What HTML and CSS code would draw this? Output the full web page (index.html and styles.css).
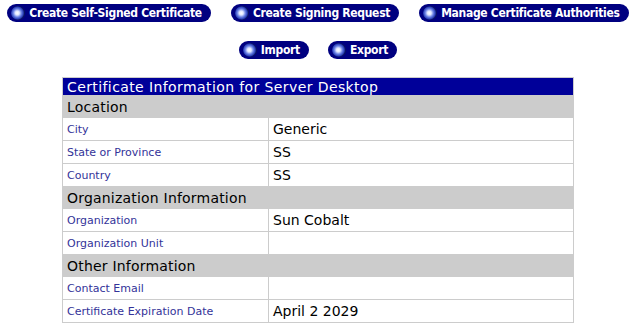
FILE: index.html
```html
<!DOCTYPE html>
<html lang="en">
<head>
  <meta charset="UTF-8" />
  <title>Certificate Information</title>
  <link rel="stylesheet" href="styles.css">
</head>
<body>
  <div class="actions">
    <a class="btn" href="#"><span class="ball"></span>Create Self-Signed Certificate</a>
    <a class="btn" href="#"><span class="ball"></span>Create Signing Request</a>
    <a class="btn" href="#"><span class="ball"></span>Manage Certificate Authorities</a>
  </div>
  <div class="actions second">
    <a class="btn" href="#"><span class="ball"></span>Import</a>
    <a class="btn" href="#"><span class="ball"></span>Export</a>
  </div>

  <table class="info">
    <tr><th colspan="2" class="title">Certificate Information for Server Desktop</th></tr>
    <tr><td colspan="2" class="section">Location</td></tr>
    <tr><td class="label">City</td><td class="value">Generic</td></tr>
    <tr><td class="label">State or Province</td><td class="value">SS</td></tr>
    <tr><td class="label">Country</td><td class="value">SS</td></tr>
    <tr><td colspan="2" class="section">Organization Information</td></tr>
    <tr><td class="label">Organization</td><td class="value">Sun Cobalt</td></tr>
    <tr><td class="label">Organization Unit</td><td class="value"></td></tr>
    <tr><td colspan="2" class="section">Other Information</td></tr>
    <tr><td class="label">Contact Email</td><td class="value"></td></tr>
    <tr><td class="label">Certificate Expiration Date</td><td class="value">April 2 2029</td></tr>
  </table>
</body>
</html>
```

FILE: styles.css
```css
body {
  margin: 0;
  background: #ffffff;
  font-family: "DejaVu Sans", sans-serif;
}

.actions {
  display: flex;
  justify-content: center;
  gap: 20px;
  padding-top: 4px;
}

.actions.second {
  gap: 19px;
  padding-top: 19px;
}

.btn {
  display: flex;
  align-items: center;
  height: 18px;
  padding: 0 9px 0 4px;
  border-radius: 9px;
  background: #000080;
  color: #ffffff;
  text-decoration: none;
  font-family: "DejaVu Sans Condensed", "DejaVu Sans", sans-serif;
  font-weight: bold;
  font-size: 12px;
  letter-spacing: -0.3px;
  white-space: nowrap;
}

.ball {
  width: 14px;
  height: 14px;
  margin-right: 4px;
  border-radius: 50%;
  background: radial-gradient(circle at 45% 50%, #ffffff 0, #dfe6ff 2px, #6f86e6 4px, #2a3fb8 6px, #0b1560 7px);
}

.info {
  margin: 18px auto 0;
  width: 512px;
  border-collapse: collapse;
}

.info td, .info th {
  border: 1px solid #cccccc;
  padding: 0 4px;
  text-align: left;
}

.title {
  background: #000099;
  color: #ffffff;
  font-weight: normal;
  font-size: 14px;
  letter-spacing: 0.4px;
  height: 17px;
  border-color: #000099;
}

.section {
  background: #cccccc;
  color: #000000;
  font-size: 14px;
  letter-spacing: 0.2px;
  height: 21px;
}

.label {
  width: 197px;
  color: #333399;
  font-size: 11px;
  height: 20px;
}

.value {
  color: #000000;
  font-size: 14px;
  height: 22px;
}
```
